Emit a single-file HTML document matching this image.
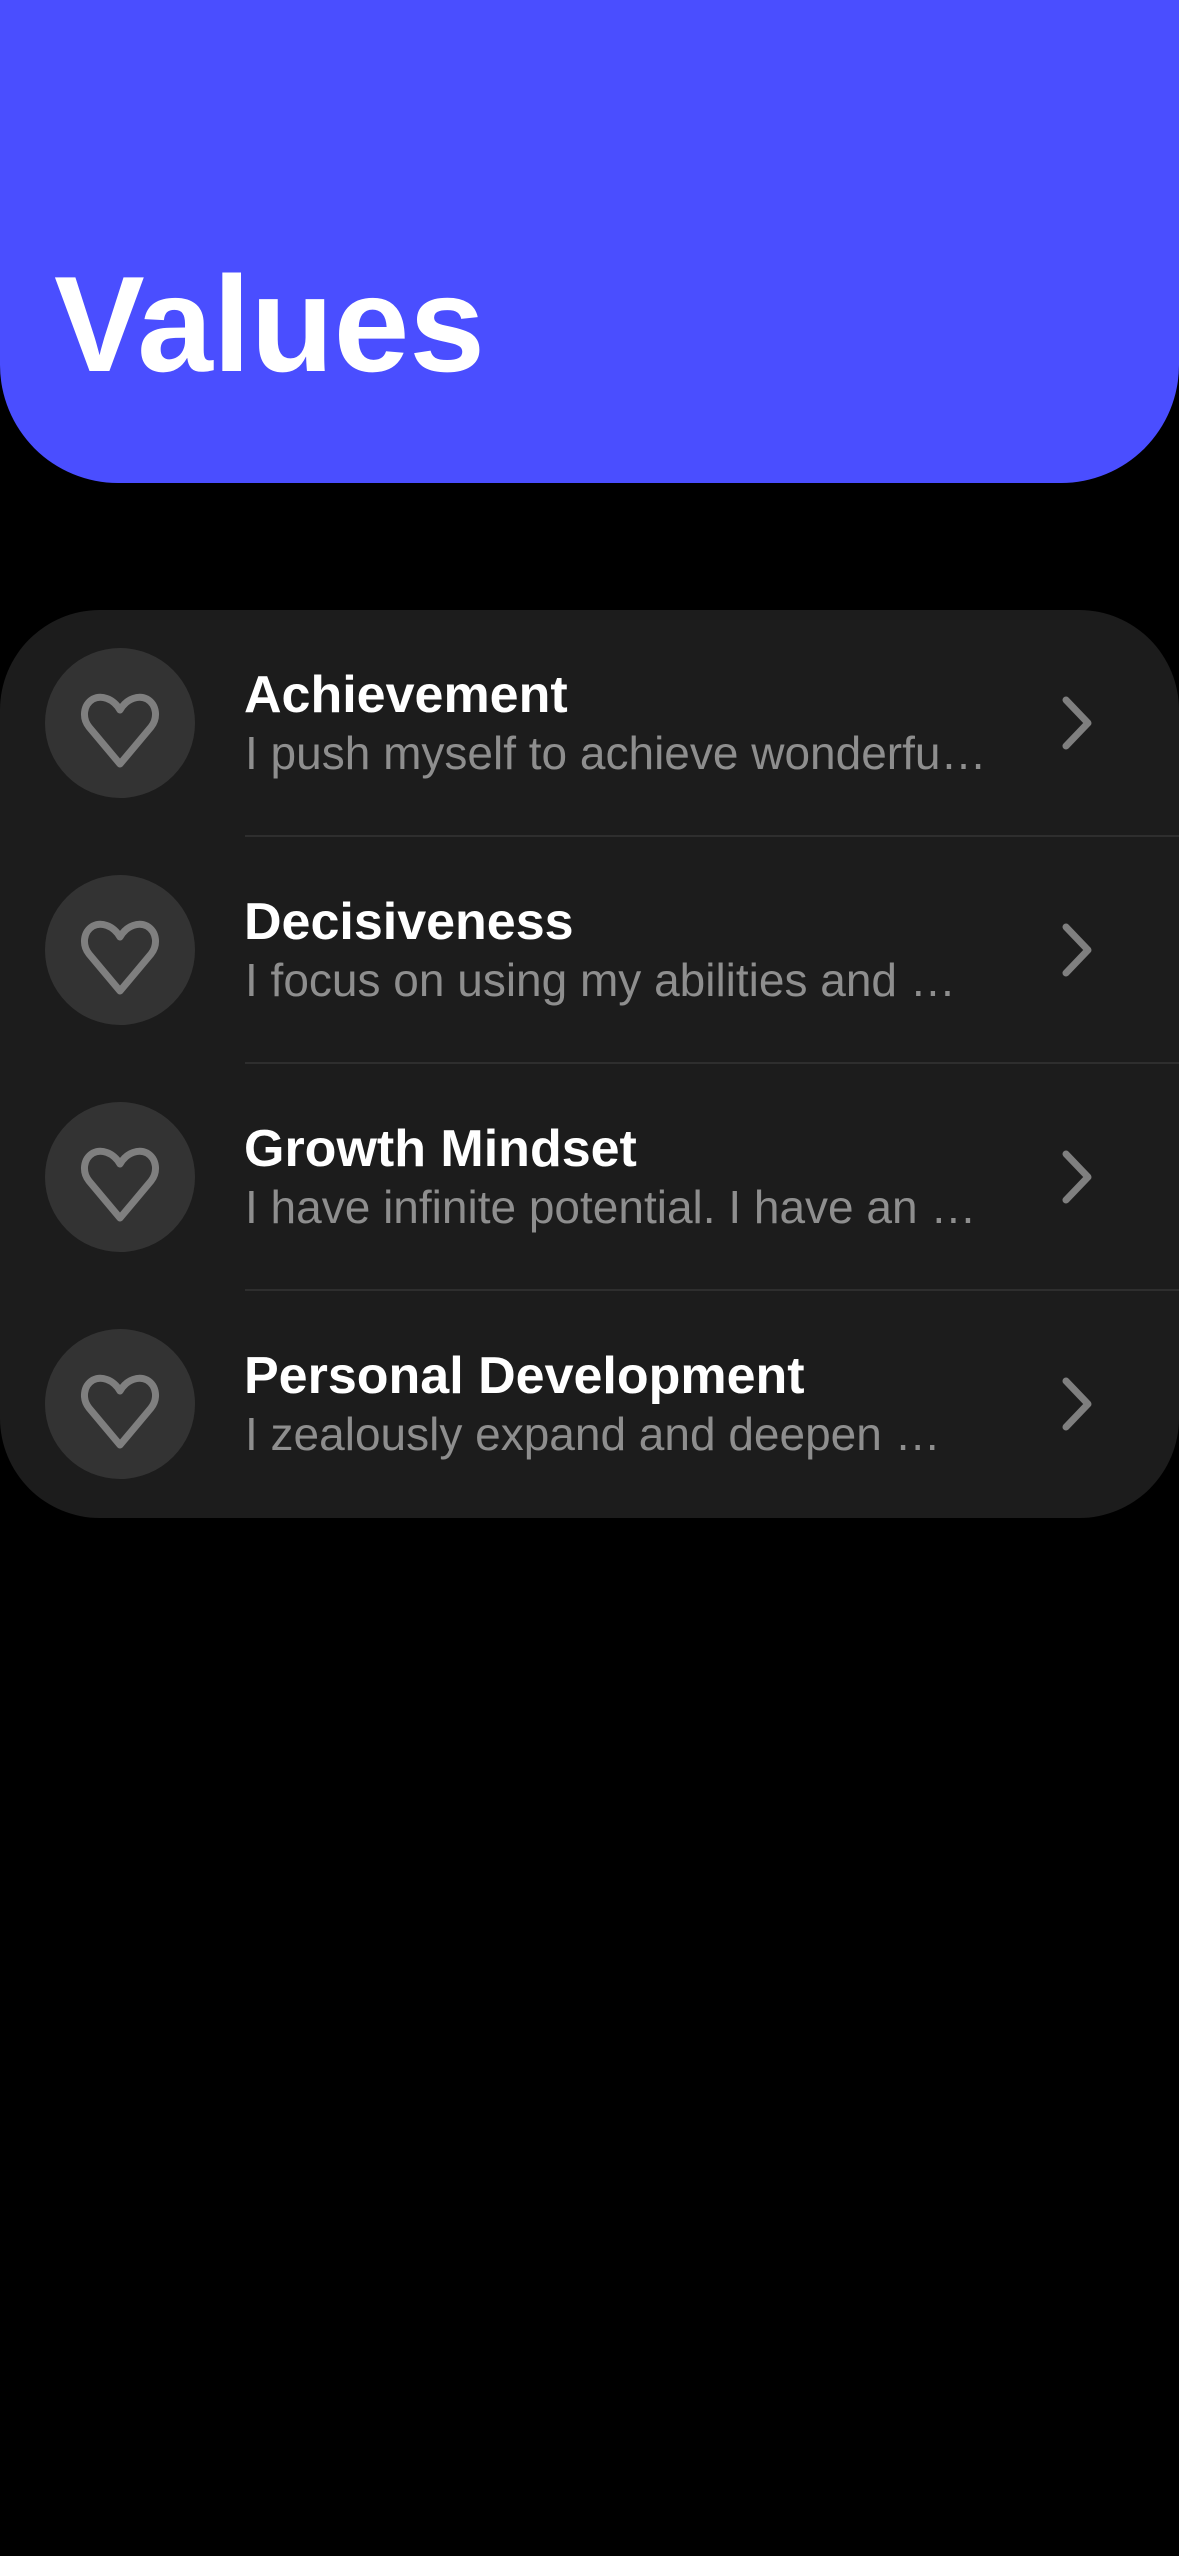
<!DOCTYPE html>
<html><head><meta charset="utf-8"><style>
html,body{margin:0;padding:0;background:#000;}
body{width:1179px;height:2556px;position:relative;overflow:hidden;font-family:"Liberation Sans",sans-serif;}
.hdr{position:absolute;left:0;top:0;width:1179px;height:483px;background:#4a4eff;border-radius:0 0 118px 118px;}
.hdr h1{position:absolute;left:54px;top:256px;margin:0;font-size:136px;line-height:136px;color:#fff;font-weight:bold;letter-spacing:0px;}
.card{position:absolute;left:0;top:610px;width:1179px;height:908px;background:#1c1c1c;border-radius:100px;overflow:hidden;}
.row{position:absolute;left:0;width:1179px;height:227px;}
.circ{position:absolute;left:45px;top:38px;width:150px;height:150px;border-radius:50%;background:#333;}
.circ svg{position:absolute;left:0;top:0;}
.t{position:absolute;left:244px;top:55px;font-size:52px;font-weight:bold;color:#fff;line-height:60px;white-space:nowrap;}
.s{position:absolute;left:245px;top:116px;width:750px;font-size:46px;color:#8e8e8e;line-height:54px;white-space:nowrap;overflow:hidden;text-overflow:ellipsis;}
.chev{position:absolute;left:1055px;top:80px;}
.div{position:absolute;left:245px;right:0;bottom:0;height:2px;background:#2e2e2e;}
</style></head><body>
<div class="hdr"><h1>Values</h1></div>
<div class="card">
<div class="row" style="top:0">
<div class="circ"><svg width="150" height="150" viewBox="0 0 150 150"><path d="M75 62 C68 50 56 47 48 51 C38 57 37 70 44 79 L75 116 L106 79 C113 70 112 57 102 51 C94 47 82 50 75 62 Z" fill="none" stroke="#7f7f7f" stroke-width="7" stroke-linejoin="round"/></svg></div>
<div class="t">Achievement</div><div class="s" style="width:748px">I push myself to achieve wonderful things every day</div>
<svg class="chev" width="50" height="66" viewBox="0 0 50 66"><path d="M11 10 L33 33 L11 56" fill="none" stroke="#7f7f7f" stroke-width="7" stroke-linecap="round" stroke-linejoin="round"/></svg>
<div class="div"></div></div>
<div class="row" style="top:227px">
<div class="circ"><svg width="150" height="150" viewBox="0 0 150 150"><path d="M75 62 C68 50 56 47 48 51 C38 57 37 70 44 79 L75 116 L106 79 C113 70 112 57 102 51 C94 47 82 50 75 62 Z" fill="none" stroke="#7f7f7f" stroke-width="7" stroke-linejoin="round"/></svg></div>
<div class="t">Decisiveness</div><div class="s" style="width:728px">I focus on using my abilities and strengths</div>
<svg class="chev" width="50" height="66" viewBox="0 0 50 66"><path d="M11 10 L33 33 L11 56" fill="none" stroke="#7f7f7f" stroke-width="7" stroke-linecap="round" stroke-linejoin="round"/></svg>
<div class="div"></div></div>
<div class="row" style="top:454px">
<div class="circ"><svg width="150" height="150" viewBox="0 0 150 150"><path d="M75 62 C68 50 56 47 48 51 C38 57 37 70 44 79 L75 116 L106 79 C113 70 112 57 102 51 C94 47 82 50 75 62 Z" fill="none" stroke="#7f7f7f" stroke-width="7" stroke-linejoin="round"/></svg></div>
<div class="t">Growth Mindset</div><div class="s" style="width:750px">I have infinite potential. I have an open mind</div>
<svg class="chev" width="50" height="66" viewBox="0 0 50 66"><path d="M11 10 L33 33 L11 56" fill="none" stroke="#7f7f7f" stroke-width="7" stroke-linecap="round" stroke-linejoin="round"/></svg>
<div class="div"></div></div>
<div class="row" style="top:681px">
<div class="circ"><svg width="150" height="150" viewBox="0 0 150 150"><path d="M75 62 C68 50 56 47 48 51 C38 57 37 70 44 79 L75 116 L106 79 C113 70 112 57 102 51 C94 47 82 50 75 62 Z" fill="none" stroke="#7f7f7f" stroke-width="7" stroke-linejoin="round"/></svg></div>
<div class="t">Personal Development</div><div class="s" style="width:712px">I zealously expand and deepen my skills</div>
<svg class="chev" width="50" height="66" viewBox="0 0 50 66"><path d="M11 10 L33 33 L11 56" fill="none" stroke="#7f7f7f" stroke-width="7" stroke-linecap="round" stroke-linejoin="round"/></svg>
</div>
</div>
</body></html>
